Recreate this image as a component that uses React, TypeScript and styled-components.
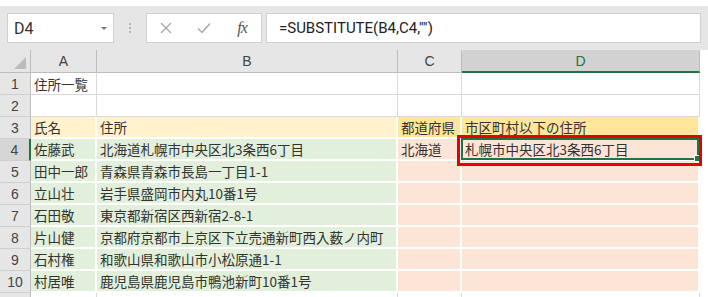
import { Fragment } from "react";
import styled, { createGlobalStyle } from "styled-components";

const GlobalStyle = createGlobalStyle`
  body {
    margin: 0;
    background: #e6e6e6;
  }
`;

const Page = styled.div`
  width: 708px;
  height: 297px;
  overflow: hidden;
  background: #e6e6e6;
  border-top: 6px solid #fff;
  box-sizing: border-box;
`;

const FormulaBar = styled.div`
  display: flex;
  align-items: flex-start;
  height: 44px;
  padding: 7px 7px 0 7px;
  box-sizing: border-box;
`;

const Box = styled.div<{ $width?: number; $grow?: boolean }>`
  box-sizing: border-box;
  height: 30px;
  width: ${({ $width }) => ($width ? `${$width}px` : "auto")};
  flex: ${({ $grow }) => ($grow ? "1" : "none")};
  background: #fff;
  border: 1px solid #cfcfcf;
  display: flex;
  align-items: center;
`;

const NameText = styled.span`
  font-family: Roboto, "Liberation Sans", sans-serif;
  font-size: 16px;
  color: #333;
  padding-left: 6px;
  flex: 1;
`;

const DropArrow = styled.span`
  width: 0;
  height: 0;
  margin-right: 6px;
  border-left: 3px solid transparent;
  border-right: 3px solid transparent;
  border-top: 3px solid #777;
`;

const Grip = styled.div`
  width: 32px;
  height: 30px;
  display: flex;
  flex-direction: column;
  align-items: center;
  justify-content: center;
  gap: 2px;
  span {
    width: 2px;
    height: 2px;
    background: #b5b5b5;
  }
`;

const Spacer = styled.div`
  width: 4px;
`;

const ToolButton = styled.span`
  width: 38px;
  display: flex;
  justify-content: center;
  align-items: center;
  color: #a8a8a8;
`;

const Fx = styled.span`
  font-family: "Liberation Serif", serif;
  font-style: italic;
  font-size: 16px;
  color: #555;
  letter-spacing: -1px;
`;

const FormulaText = styled.span`
  font-family: Roboto, "Liberation Sans", sans-serif;
  font-size: 15px;
  color: #222;
  padding-left: 12px;
`;

const Sheet = styled.div`
  display: grid;
  grid-template-columns: 31px 66px 301px 64px 238px 8px;
  grid-template-rows: 23px repeat(11, 22px);
`;

const Corner = styled.div`
  box-sizing: border-box;
  border-right: 1px solid #bdbdbd;
  border-bottom: 1px solid #bdbdbd;
  display: flex;
  align-items: flex-end;
  justify-content: flex-end;
  padding: 0 4px 3px 0;
  svg {
    display: block;
  }
`;

const ColHead = styled.div<{ $active?: boolean }>`
  box-sizing: border-box;
  background: ${({ $active }) => ($active ? "#d2d2d2" : "#e6e6e6")};
  border-right: 1px solid #bdbdbd;
  border-bottom: ${({ $active }) =>
    $active ? "2px solid #217346" : "1px solid #bdbdbd"};
  color: ${({ $active }) => ($active ? "#217346" : "#444")};
  font-family: "Liberation Sans", sans-serif;
  font-size: 14px;
  display: flex;
  align-items: center;
  justify-content: center;
`;

const RowHead = styled.div<{ $active?: boolean }>`
  box-sizing: border-box;
  background: ${({ $active }) => ($active ? "#d6d6d6" : "#e6e6e6")};
  border-right: ${({ $active }) =>
    $active ? "2px solid #217346" : "1px solid #bdbdbd"};
  border-bottom: 1px solid #cfcfcf;
  color: #444;
  font-family: "Liberation Sans", sans-serif;
  font-size: 14px;
  display: flex;
  align-items: center;
  justify-content: center;
`;

const Cell = styled.div<{ $fill?: string }>`
  position: relative;
  box-sizing: border-box;
  background: ${({ $fill }) => $fill ?? "#fff"};
  border-right: ${({ $fill }) => ($fill ? "2px solid #fff" : "1px solid #dadada")};
  border-bottom: ${({ $fill }) => ($fill ? "2px solid #fff" : "1px solid #dadada")};
  padding: 0 3px;
  font-family: "Noto Sans CJK JP", "Liberation Sans", sans-serif;
  font-size: 13.5px;
  color: #333;
  white-space: nowrap;
  display: flex;
  align-items: center;
`;

const Filler = styled.div`
  background: #fff;
`;

const Selection = styled.div`
  position: absolute;
  inset: -1px;
  border: 2px solid #217346;
  z-index: 2;
  pointer-events: none;
  &::after {
    content: "";
    position: absolute;
    right: -4px;
    bottom: -4px;
    width: 5px;
    height: 5px;
    background: #217346;
    border: 1px solid #fff;
  }
`;

const Highlight = styled.div`
  position: absolute;
  left: -5px;
  top: -4px;
  right: -4px;
  bottom: -7px;
  border: 3px solid #e60000;
  z-index: 3;
  pointer-events: none;
`;

const CREAM = "#fff2cc";
const YELLOW = "#ffe699";
const GREEN = "#e2efda";
const PEACH = "#fce4d6";
const BODY = [GREEN, GREEN, PEACH, PEACH];

type Row = { cells: string[]; fills?: (string | undefined)[] };

const rows: Row[] = [
  { cells: ["住所一覧", "", "", ""] },
  { cells: ["", "", "", ""] },
  { cells: ["氏名", "住所", "都道府県", "市区町村以下の住所"], fills: [CREAM, CREAM, YELLOW, YELLOW] },
  { cells: ["佐藤武", "北海道札幌市中央区北3条西6丁目", "北海道", "札幌市中央区北3条西6丁目"], fills: BODY },
  { cells: ["田中一郎", "青森県青森市長島一丁目1-1", "", ""], fills: BODY },
  { cells: ["立山壮", "岩手県盛岡市内丸10番1号", "", ""], fills: BODY },
  { cells: ["石田敬", "東京都新宿区西新宿2-8-1", "", ""], fills: BODY },
  { cells: ["片山健", "京都府京都市上京区下立売通新町西入薮ノ内町", "", ""], fills: BODY },
  { cells: ["石村権", "和歌山県和歌山市小松原通1-1", "", ""], fills: BODY },
  { cells: ["村居唯", "鹿児島県鹿児島市鴨池新町10番1号", "", ""], fills: BODY },
  { cells: ["", "", "", ""] },
];

const columns = ["A", "B", "C", "D"];

export default function App() {
  return (
    <Page>
      <GlobalStyle />
      <FormulaBar>
        <Box $width={107}>
          <NameText>D4</NameText>
          <DropArrow />
        </Box>
        <Grip>
          <span />
          <span />
          <span />
        </Grip>
        <Box $width={116}>
          <ToolButton>
            <svg width="14" height="14" viewBox="0 0 14 14">
              <path d="M2 2 L12 12 M12 2 L2 12" stroke="currentColor" strokeWidth="1.3" fill="none" />
            </svg>
          </ToolButton>
          <ToolButton>
            <svg width="16" height="14" viewBox="0 0 16 14">
              <path d="M2 7.5 L6 11.5 L14 2.5" stroke="currentColor" strokeWidth="1.5" fill="none" />
            </svg>
          </ToolButton>
          <ToolButton>
            <Fx>fx</Fx>
          </ToolButton>
        </Box>
        <Spacer />
        <Box $grow>
          <FormulaText>=SUBSTITUTE(B4,C4,"")</FormulaText>
        </Box>
      </FormulaBar>
      <Sheet>
        <Corner>
          <svg width="12" height="12" viewBox="0 0 12 12">
            <polygon points="12,0 12,12 0,12" fill="#bcbcbc" />
          </svg>
        </Corner>
        {columns.map((c) => (
          <ColHead key={c} $active={c === "D"}>
            {c}
          </ColHead>
        ))}
        <Filler />
        {rows.map((row, r) => (
          <Fragment key={r}>
            {/* row 11 sits below the window edge, only its top line shows */}
            <RowHead $active={r === 3}>{r < 10 ? r + 1 : ""}</RowHead>
            {row.cells.map((text, c) => (
              <Cell key={c} $fill={row.fills?.[c]}>
                {text}
                {r === 3 && c === 3 && (
                  <>
                    <Selection />
                    <Highlight />
                  </>
                )}
              </Cell>
            ))}
            <Filler />
          </Fragment>
        ))}
      </Sheet>
    </Page>
  );
}
